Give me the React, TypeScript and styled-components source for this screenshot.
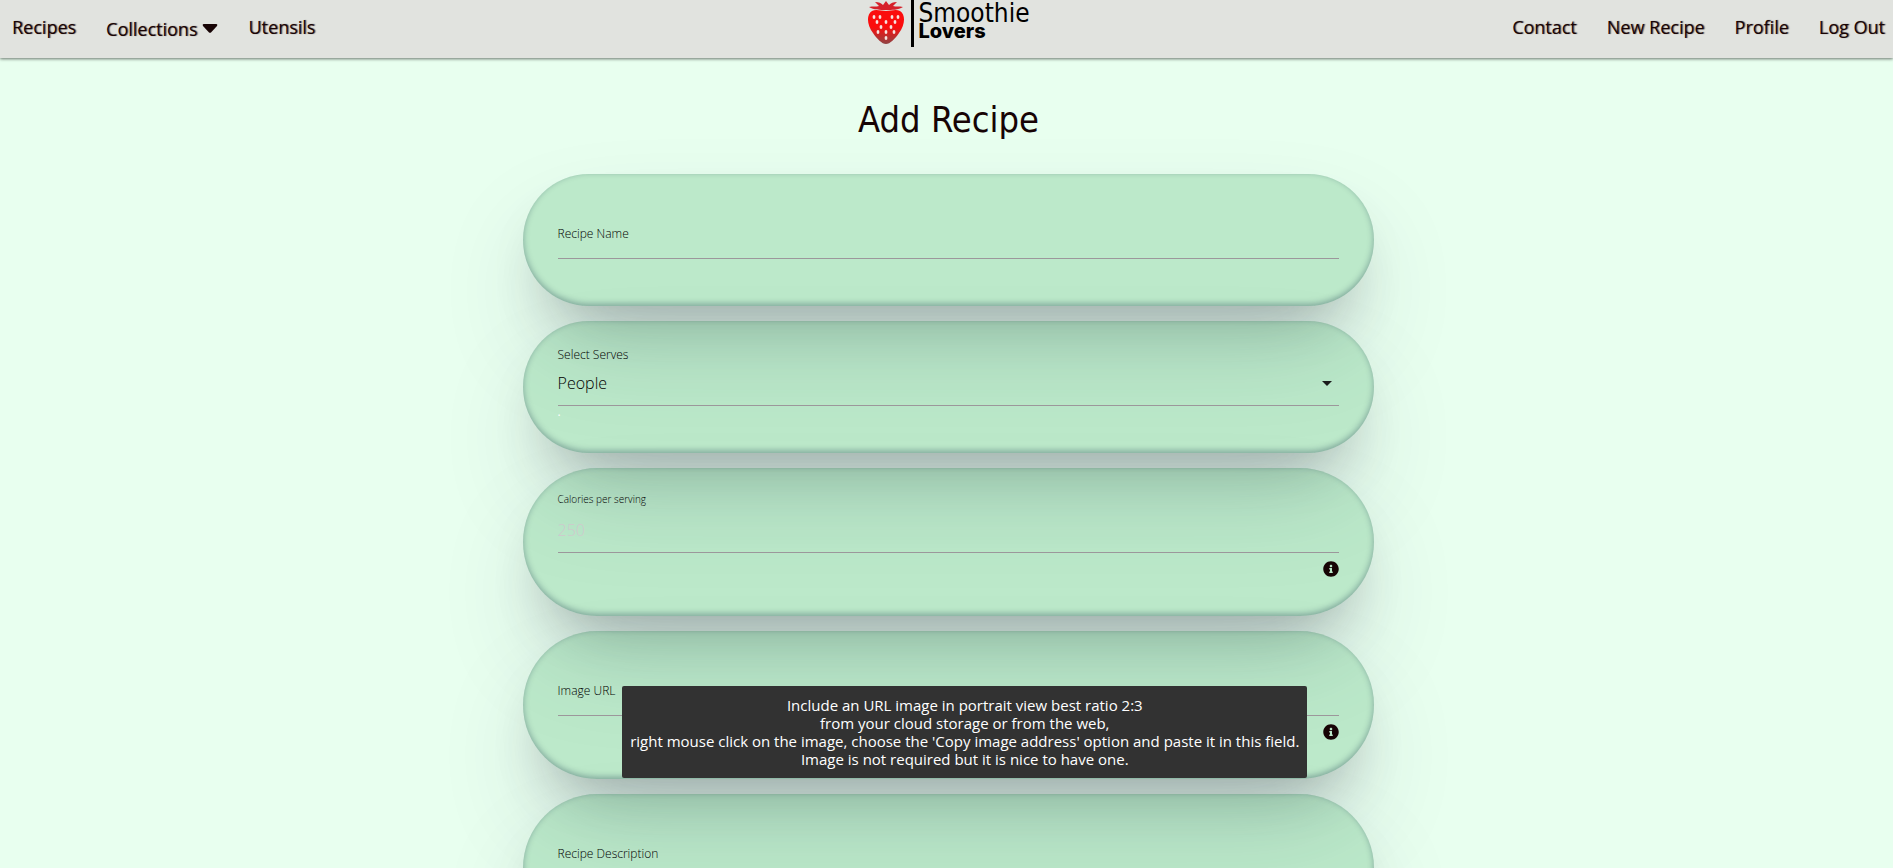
import React from "react";
import styled, { createGlobalStyle } from "styled-components";

const GlobalStyle = createGlobalStyle`
  * { box-sizing: border-box; }
  body {
    margin: 0;
    background: #e8ffef;
    color: #170405;
    font-family: "Open Sans", "Noto Sans", sans-serif;
  }
`;

const Header = styled.header`
  position: relative;
  z-index: 2;
  display: grid;
  grid-template-columns: 1fr auto 1fr;
  align-items: start;
  height: 58px;
  padding: 0 8px 0 12px;
  background: #e1e3df;
  box-shadow: 0 1px 3px rgba(0, 0, 0, 0.55);
`;

const NavGroup = styled.nav<{ $end?: boolean }>`
  display: flex;
  align-items: center;
  justify-content: ${(p) => (p.$end ? "flex-end" : "flex-start")};
  gap: 30px;
  height: 54px;
`;

const NavLink = styled.a`
  color: #170405;
  font-size: 18px;
  line-height: 24px;
  text-decoration: none;
  text-shadow: 1px 0 1px rgba(23, 4, 5, 0.6);
`;

const NavMenu = styled.button`
  display: flex;
  align-items: center;
  gap: 5px;
  padding: 3px 0 0;
  border: 0;
  background: none;
  color: #170405;
  font: inherit;
  font-size: 18px;
  line-height: 24px;
  text-shadow: 1px 0 1px rgba(23, 4, 5, 0.6);
`;

const Brand = styled.a`
  display: flex;
  align-items: flex-start;
  color: #000;
  text-decoration: none;
`;

const BrandText = styled.span`
  display: flex;
  flex-direction: column;
  height: 47px;
  margin-left: 6px;
  padding: 2px 0 0 4px;
  border-left: 3px solid #000;
`;

const BrandTop = styled.span`
  font-family: "DejaVu Sans Condensed", "DejaVu Sans", sans-serif;
  font-stretch: condensed;
  font-size: 26px;
  line-height: 22px;
`;

const BrandBottom = styled.span`
  font-family: Inter, sans-serif;
  font-weight: 800;
  font-size: 20px;
  line-height: 14px;
`;

const Main = styled.main`
  padding-left: 4px;
`;

const Title = styled.h1`
  margin: 0;
  padding: 39px 0 31px;
  text-align: center;
  font-family: "DejaVu Sans Condensed", "DejaVu Sans", sans-serif;
  font-stretch: condensed;
  font-weight: 400;
  font-size: 36px;
  line-height: 46px;
`;

const Form = styled.form`
  display: flex;
  flex-direction: column;
  gap: 15px;
  width: 45vw;
  margin: 0 auto;
`;

const Card = styled.div`
  padding: 20px 35px;
  border-radius: 80px;
  background: rgba(56, 167, 91, 0.25);
  box-shadow:
    rgba(50, 50, 93, 0.25) 0 50px 100px -20px,
    rgba(0, 0, 0, 0.3) 0 30px 60px -30px,
    rgba(10, 37, 64, 0.35) 0 -2px 6px 0 inset;
`;

const Field = styled.div`
  display: grid;
  grid-template-columns: minmax(0, 1fr);
  grid-template-rows: 26px 32px;
  padding-bottom: 6px;
  border-bottom: 1px solid #9c979b;
`;

const Label = styled.label<{ $place: "above" | "aboveSmall" | "resting" }>`
  grid-column: 1;
  grid-row: ${(p) => (p.$place === "resting" ? 2 : 1)};
  font-weight: 300;
  font-size: ${(p) => (p.$place === "aboveSmall" ? 10 : 12)}px;
  line-height: ${(p) => (p.$place === "aboveSmall" ? 22 : 28)}px;
  color: #000;
  pointer-events: none;
`;

const Input = styled.input`
  grid-column: 1;
  grid-row: 2;
  width: 100%;
  padding: 0;
  border: 0;
  outline: 0;
  background: none;
  font: inherit;
  font-weight: 300;
  font-size: 16px;
  &::placeholder { color: #cfc9cd; opacity: 1; }
`;

const TextArea = styled.textarea`
  grid-column: 1;
  grid-row: 2;
  width: 100%;
  padding: 0;
  border: 0;
  outline: 0;
  resize: none;
  background: none;
  font: inherit;
  font-size: 16px;
`;

const Select = styled.select`
  grid-column: 1;
  grid-row: 2;
  width: 100%;
  padding: 0;
  border: 0;
  outline: 0;
  appearance: none;
  background: none;
  color: #000;
  font: inherit;
  font-weight: 300;
  font-size: 16px;
`;

const SelectArrow = styled.svg`
  grid-column: 1;
  grid-row: 2;
  align-self: center;
  justify-self: end;
  margin-right: 7px;
  pointer-events: none;
`;

const Below = styled.div`
  display: flex;
  justify-content: space-between;
  min-height: 27px;
`;

const Hint = styled.span`
  color: #fff;
  font-size: 12px;
  line-height: 12px;
`;

const InfoWrap = styled.div`
  position: relative;
  height: 16px;
  margin: 8px 0 19px auto;
`;

const InfoButton = styled.button`
  display: block;
  padding: 0;
  border: 0;
  background: none;
`;

const InfoIcon = styled.svg`
  display: block;
`;

const Tooltip = styled.div`
  position: absolute;
  z-index: 1;
  top: 50%;
  right: 100%;
  transform: translateY(-50%);
  margin-right: 16px;
  padding: 10px 8px;
  border-radius: 2px;
  background: #323232;
  color: #fff;
  font-size: 15px;
  line-height: 18px;
  text-align: center;
  white-space: pre;
`;

const seeds = [
  [13, 17], [25, 17], [7, 17], [31, 17], [19, 22], [10, 22], [28, 22],
  [14, 27], [24, 27], [11, 32], [19, 32], [27, 32], [19, 38],
];

function Strawberry() {
  return (
    <svg width="38" height="46" viewBox="0 0 38 46" aria-hidden="true">
      <defs>
        <linearGradient id="berry" x1="0.5" y1="0" x2="0.5" y2="1">
          <stop offset="0.5" stopColor="#fb0d0d" />
          <stop offset="1" stopColor="#8f4444" />
        </linearGradient>
      </defs>
      <path d="M5 11C-1 15 0 25 6 33C10 39 15 44 19 44C23 44 28 39 32 33C38 25 39 15 33 11C29 9 24 11 19 11C14 11 9 9 5 11Z" fill="url(#berry)" />
      <path d="M2 7C6 6 9 7 12 6L8 2C12 2 14 3 16 5L19 1L22 5C24 3 26 2 30 2L26 6C29 7 32 6 36 7C31 10 25 10 19 10C13 10 7 10 2 7Z" fill="#d6202a" />
      {seeds.map(([x, y]) => (
        <ellipse key={`${x}-${y}`} cx={x} cy={y} rx="1.4" ry="1.9" fill="#f6e4e0" />
      ))}
    </svg>
  );
}

function Info({ label, tip }: { label: string; tip?: string }) {
  return (
    <InfoWrap>
      <InfoButton type="button" aria-label={label}>
        <InfoIcon width="16" height="16" viewBox="0 0 512 512" aria-hidden="true">
          <path
            fill="#170405"
            d="M256 8C119 8 8 119 8 256s111 248 248 248 248-111 248-248S393 8 256 8zm0 110c23 0 42 19 42 42s-19 42-42 42-42-19-42-42 19-42 42-42zm56 254c0 7-5 12-12 12h-88c-7 0-12-5-12-12v-24c0-7 5-12 12-12h12v-64h-12c-7 0-12-5-12-12v-24c0-7 5-12 12-12h64c7 0 12 5 12 12v100h12c7 0 12 5 12 12v24z"
          />
        </InfoIcon>
      </InfoButton>
      {tip && <Tooltip role="tooltip">{tip}</Tooltip>}
    </InfoWrap>
  );
}

const imageTip = [
  "Include an URL image in portrait view best ratio 2:3",
  "from your cloud storage or from the web,",
  "right mouse click on the image, choose the 'Copy image address' option and paste it in this field.",
  "Image is not required but it is nice to have one.",
].join("\n");

export default function App() {
  return (
    <>
      <GlobalStyle />
      <Header>
        <NavGroup>
          <NavLink href="#recipes">Recipes</NavLink>
          <NavMenu type="button">
            Collections
            <svg width="16" height="10" viewBox="0 0 16 10" aria-hidden="true">
              <path d="M1.5 0H14.5Q16 .6 15 2L9 8.4Q8 9.3 7 8.4L1 2Q0 .6 1.5 0Z" fill="#170405" />
            </svg>
          </NavMenu>
          <NavLink href="#utensils">Utensils</NavLink>
        </NavGroup>
        <Brand href="#home">
          <Strawberry />
          <BrandText>
            <BrandTop>Smoothie</BrandTop>
            <BrandBottom>Lovers</BrandBottom>
          </BrandText>
        </Brand>
        <NavGroup $end>
          <NavLink href="#contact">Contact</NavLink>
          <NavLink href="#new">New Recipe</NavLink>
          <NavLink href="#profile">Profile</NavLink>
          <NavLink href="#logout">Log Out</NavLink>
        </NavGroup>
      </Header>
      <Main>
        <Title>Add Recipe</Title>
        <Form>
          <Card>
            <Field>
              <Input id="name" type="text" />
              <Label htmlFor="name" $place="resting">Recipe Name</Label>
            </Field>
            <Below />
          </Card>
          <Card>
            <Field>
              <Label htmlFor="serves" $place="above">Select Serves</Label>
              <Select id="serves">
                <option>People</option>
              </Select>
              <SelectArrow width="10" height="5" viewBox="0 0 10 5" aria-hidden="true">
                <path d="M0 0H10L5 5Z" fill="#1b1b1b" />
              </SelectArrow>
            </Field>
            <Below>
              <Hint>.</Hint>
            </Below>
          </Card>
          <Card>
            <Field>
              <Label htmlFor="calories" $place="aboveSmall">Calories per serving</Label>
              <Input id="calories" type="text" placeholder="250" />
            </Field>
            <Below>
              <Info label="About calories" />
            </Below>
          </Card>
          <Card>
            <Field>
              <Input id="image" type="url" />
              <Label htmlFor="image" $place="resting">Image URL</Label>
            </Field>
            <Below>
              <Info label="About the image URL" tip={imageTip} />
            </Below>
          </Card>
          <Card>
            <Field>
              <TextArea id="description" rows={1} />
              <Label htmlFor="description" $place="resting">Recipe Description</Label>
            </Field>
            <Below>
              <Info label="About the description" />
            </Below>
          </Card>
        </Form>
      </Main>
    </>
  );
}
